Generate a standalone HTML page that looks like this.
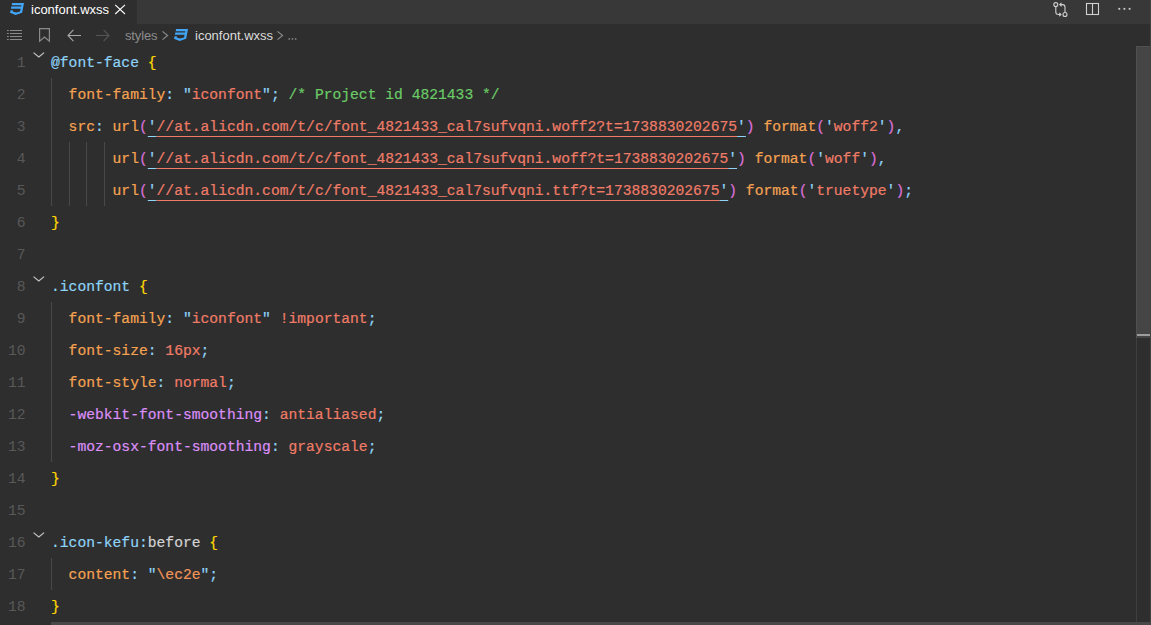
<!DOCTYPE html>
<html>
<head>
<meta charset="utf-8">
<style>
*{box-sizing:border-box;margin:0;padding:0}
html,body{width:1151px;height:625px;overflow:hidden;background:#2e2e2e}
body{position:relative;font-family:"Liberation Sans",sans-serif}
#tabs{position:absolute;left:0;top:0;width:1151px;height:24px;background:#383838}
#tab{position:absolute;left:0;top:0;width:137px;height:24px;background:#2e2e2e}
.ui{position:absolute;white-space:pre;font-family:"Liberation Sans",sans-serif}
#crumbs{position:absolute;left:0;top:24px;width:1151px;height:22px;background:#2e2e2e}
#code{position:absolute;left:0;top:46px;width:1136px;height:579px}
.ln{position:absolute;left:0;height:32px;width:1136px}
.num{position:absolute;left:0;width:25.5px;text-align:right;top:1px;line-height:32px;font-family:"Liberation Mono",monospace;font-size:14.667px;color:#585858}
.tx{position:absolute;left:51px;top:1px;line-height:32px;font-family:"Liberation Mono",monospace;font-size:14.667px;white-space:pre;color:#d4d4d4;-webkit-text-stroke:0.2px}
.g{position:absolute;top:0;width:1px;height:32px;background:#484848}
.fold{position:absolute;left:32.6px;top:6px}
.b{color:#8fd3f7}.y{color:#ffd700}.o{color:#f5a352}.s{color:#f07c68}.c{color:#6bcb67}.p{color:#da70d6}.v{color:#dc8ff8}.w{color:#d4d4d4}.e{color:#f0955a}
.u{text-decoration:underline;text-decoration-thickness:1px;text-underline-offset:5px}
#vs{position:absolute;left:1136px;top:46px;width:14px;height:579px;border-left:1px solid #3f3f3f}
#slider{position:absolute;left:1136px;top:46px;width:14px;height:292px;background:#454545;border-left:1px solid #505050;border-top:1px solid #505050}
#mark{position:absolute;left:1137px;top:334px;width:13px;height:2px;background:#9c9c9c}
#redge{position:absolute;left:1150px;top:0;width:1px;height:625px;background:#444}
#hs{position:absolute;left:51px;top:622px;width:1099px;height:3px;background:#484848}
</style>
</head>
<body>
<div id="tabs"><div id="tab">
<svg style="position:absolute;left:10px;top:3px" width="14" height="12" viewBox="0 32 480 448" preserveAspectRatio="none"><path fill="#42a5f5" d="M480 32l-64 368-223.300 80L0 400l19.600-94.800h82l-8 40.600L210 390.200l134.100-44.400 18.800-97.100H29.500l16-82h333.700l10.500-52.700H56.300l16.300-82H480z"/></svg>
<span class="ui" id="tt" style="left:31px;top:-2px;line-height:24px;font-size:13px;color:#ffffff">iconfont.wxss</span>
<svg style="position:absolute;left:114px;top:3px" width="12" height="12" viewBox="0 0 12 12"><path d="M1.2 1.8 L11 11 M11 1.8 L1.2 11" stroke="#ffffff" stroke-width="1.1" fill="none"/></svg>
</div>
<svg style="position:absolute;left:1052px;top:1px" width="18" height="18" viewBox="0 0 18 18" fill="none" stroke="#d0d0d0" stroke-width="1.1">
<circle cx="3.8" cy="3.6" r="2"/><circle cx="13" cy="13.5" r="2"/>
<path d="M3.8 5.6 V11 Q3.8 13.5 6.3 13.5 H9 M7.3 11.8 L9 13.5 L7.3 15.2"/>
<path d="M13 11.5 V6.1 Q13 3.6 10.5 3.6 H7.8 M9.5 1.9 L7.8 3.6 L9.5 5.3"/>
</svg>
<svg style="position:absolute;left:1085px;top:2px" width="16" height="15" viewBox="0 0 16 15" fill="none" stroke="#d0d0d0" stroke-width="1.1">
<rect x="1.5" y="1.5" width="12" height="11"/><path d="M7.5 1.5 V12.5"/>
</svg>
<svg style="position:absolute;left:1117px;top:7px" width="16" height="4" viewBox="0 0 16 4" fill="#d0d0d0"><rect x="1.4" y="0.9" width="1.8" height="1.8"/><rect x="6.5" y="0.9" width="1.8" height="1.8"/><rect x="11.7" y="0.9" width="1.8" height="1.8"/></svg>
</div>
<div id="crumbs">
<svg style="position:absolute;left:6px;top:5px" width="17" height="12" viewBox="0 0 17 12" fill="#8a8a8a">
<rect x="1" y="1" width="1.8" height="1"/><rect x="4" y="1" width="12" height="1"/>
<rect x="1" y="4" width="1.8" height="1"/><rect x="4" y="4" width="12" height="1"/>
<rect x="1" y="7" width="1.8" height="1"/><rect x="4" y="7" width="12" height="1"/>
<rect x="1" y="10" width="1.8" height="1"/><rect x="4" y="10" width="12" height="1"/>
</svg>
<svg style="position:absolute;left:38px;top:3px" width="14" height="16" viewBox="0 0 14 16" fill="none" stroke="#8a8a8a" stroke-width="1.2"><path d="M1.6 1.6 H11.4 V14.2 L6.5 10 L1.6 14.2 Z"/></svg>
<svg style="position:absolute;left:66px;top:5px" width="16" height="13" viewBox="0 0 16 13" fill="none" stroke="#a8a8a8" stroke-width="1.1"><path d="M15 6.5 H2.2 M7.4 0.9 L2 6.5 L7.4 12.1"/></svg>
<svg style="position:absolute;left:95px;top:5px" width="16" height="13" viewBox="0 0 16 13" fill="none" stroke="#555555" stroke-width="1.1"><path d="M1 6.5 H13.8 M8.6 0.9 L14 6.5 L8.6 12.1"/></svg>
<span class="ui" style="left:125px;top:1px;line-height:22px;font-size:13px;letter-spacing:-0.15px;color:#8c8c8c" id="c1">styles</span>
<svg style="position:absolute;left:161px;top:6px" width="8" height="11" viewBox="0 0 8 11" fill="none" stroke="#8c8c8c" stroke-width="1.1"><path d="M1.5 1.4 L6.6 5.5 L1.5 9.6"/></svg>
<svg style="position:absolute;left:174px;top:5px" width="14" height="12" viewBox="0 32 480 448" preserveAspectRatio="none"><path fill="#42a5f5" d="M480 32l-64 368-223.300 80L0 400l19.600-94.800h82l-8 40.600L210 390.200l134.100-44.400 18.800-97.100H29.500l16-82h333.700l10.500-52.700H56.300l16.300-82H480z"/></svg>
<span class="ui" style="left:195px;top:1px;line-height:22px;font-size:13px;color:#dcdcdc" id="c2">iconfont.wxss</span>
<svg style="position:absolute;left:276px;top:6px" width="8" height="11" viewBox="0 0 8 11" fill="none" stroke="#8c8c8c" stroke-width="1.1"><path d="M1.5 1.4 L6.6 5.5 L1.5 9.6"/></svg>
<svg style="position:absolute;left:288px;top:14px" width="10" height="3" viewBox="0 0 10 3" fill="#8c8c8c"><rect x="0.5" y="0.2" width="1.5" height="1.5"/><rect x="3.7" y="0.2" width="1.5" height="1.5"/><rect x="6.9" y="0.2" width="1.5" height="1.5"/></svg>
</div>
<div id="code">
<div class="ln" style="top:0px"><span class="num">1</span><svg class="fold" viewBox="0 0 12 7" width="12" height="7"><path d="M0.5 0.6 L5.8 5.0 L11.1 0.6" fill="none" stroke="#c8c8c8" stroke-width="1.1"/></svg><span class="tx"><span class="b">@font-face</span> <span class="y">{</span></span></div>
<div class="ln" style="top:32px"><span class="num">2</span><i class="g" style="left:51px"></i><span class="tx">  <span class="o">font-family</span><span class="b">:</span> <span class="b">"</span><span class="s">iconfont</span><span class="b">";</span> <span class="c">/* Project id 4821433 */</span></span></div>
<div class="ln" style="top:64px"><span class="num">3</span><i class="g" style="left:51px"></i><span class="tx">  <span class="o">src</span><span class="b">:</span> <span class="o">url</span><span class="p">(</span><span class="b u">'</span><span class="s u">//at.alicdn.com/t/c/font_4821433_cal7sufvqni.woff2?t=1738830202675</span><span class="b u">'</span><span class="p">)</span> <span class="o">format</span><span class="p">(</span><span class="b">'</span><span class="s">woff2</span><span class="b">'</span><span class="p">)</span><span class="b">,</span></span></div>
<div class="ln" style="top:96px"><span class="num">4</span><i class="g" style="left:51px"></i><i class="g" style="left:69px"></i><i class="g" style="left:86px"></i><i class="g" style="left:104px"></i><span class="tx">       <span class="o">url</span><span class="p">(</span><span class="b u">'</span><span class="s u">//at.alicdn.com/t/c/font_4821433_cal7sufvqni.woff?t=1738830202675</span><span class="b u">'</span><span class="p">)</span> <span class="o">format</span><span class="p">(</span><span class="b">'</span><span class="s">woff</span><span class="b">'</span><span class="p">)</span><span class="b">,</span></span></div>
<div class="ln" style="top:128px"><span class="num">5</span><i class="g" style="left:51px"></i><i class="g" style="left:69px"></i><i class="g" style="left:86px"></i><i class="g" style="left:104px"></i><span class="tx">       <span class="o">url</span><span class="p">(</span><span class="b u">'</span><span class="s u">//at.alicdn.com/t/c/font_4821433_cal7sufvqni.ttf?t=1738830202675</span><span class="b u">'</span><span class="p">)</span> <span class="o">format</span><span class="p">(</span><span class="b">'</span><span class="s">truetype</span><span class="b">'</span><span class="p">)</span><span class="b">;</span></span></div>
<div class="ln" style="top:160px"><span class="num">6</span><span class="tx"><span class="y">}</span></span></div>
<div class="ln" style="top:192px"><span class="num">7</span><span class="tx"></span></div>
<div class="ln" style="top:224px"><span class="num">8</span><svg class="fold" viewBox="0 0 12 7" width="12" height="7"><path d="M0.5 0.6 L5.8 5.0 L11.1 0.6" fill="none" stroke="#c8c8c8" stroke-width="1.1"/></svg><span class="tx"><span class="b">.iconfont</span> <span class="y">{</span></span></div>
<div class="ln" style="top:256px"><span class="num">9</span><i class="g" style="left:51px"></i><span class="tx">  <span class="o">font-family</span><span class="b">:</span> <span class="b">"</span><span class="s">iconfont</span><span class="b">"</span> <span class="s">!important</span><span class="b">;</span></span></div>
<div class="ln" style="top:288px"><span class="num">10</span><i class="g" style="left:51px"></i><span class="tx">  <span class="o">font-size</span><span class="b">:</span> <span class="s">16px</span><span class="b">;</span></span></div>
<div class="ln" style="top:320px"><span class="num">11</span><i class="g" style="left:51px"></i><span class="tx">  <span class="o">font-style</span><span class="b">:</span> <span class="s">normal</span><span class="b">;</span></span></div>
<div class="ln" style="top:352px"><span class="num">12</span><i class="g" style="left:51px"></i><span class="tx">  <span class="v">-webkit-font-smoothing</span><span class="b">:</span> <span class="s">antialiased</span><span class="b">;</span></span></div>
<div class="ln" style="top:384px"><span class="num">13</span><i class="g" style="left:51px"></i><span class="tx">  <span class="v">-moz-osx-font-smoothing</span><span class="b">:</span> <span class="s">grayscale</span><span class="b">;</span></span></div>
<div class="ln" style="top:416px"><span class="num">14</span><span class="tx"><span class="y">}</span></span></div>
<div class="ln" style="top:448px"><span class="num">15</span><span class="tx"></span></div>
<div class="ln" style="top:480px"><span class="num">16</span><svg class="fold" viewBox="0 0 12 7" width="12" height="7"><path d="M0.5 0.6 L5.8 5.0 L11.1 0.6" fill="none" stroke="#c8c8c8" stroke-width="1.1"/></svg><span class="tx"><span class="b">.icon-kefu:</span><span class="w">before</span> <span class="y">{</span></span></div>
<div class="ln" style="top:512px"><span class="num">17</span><i class="g" style="left:51px"></i><span class="tx">  <span class="o">content</span><span class="b">:</span> <span class="b">"</span><span class="e">\ec2e</span><span class="b">";</span></span></div>
<div class="ln" style="top:544px"><span class="num">18</span><span class="tx"><span class="y">}</span></span></div>
</div>
<div id="vs"></div><div id="slider"></div><div id="mark"></div><div id="hs"></div><div id="redge"></div>
</body>
</html>
